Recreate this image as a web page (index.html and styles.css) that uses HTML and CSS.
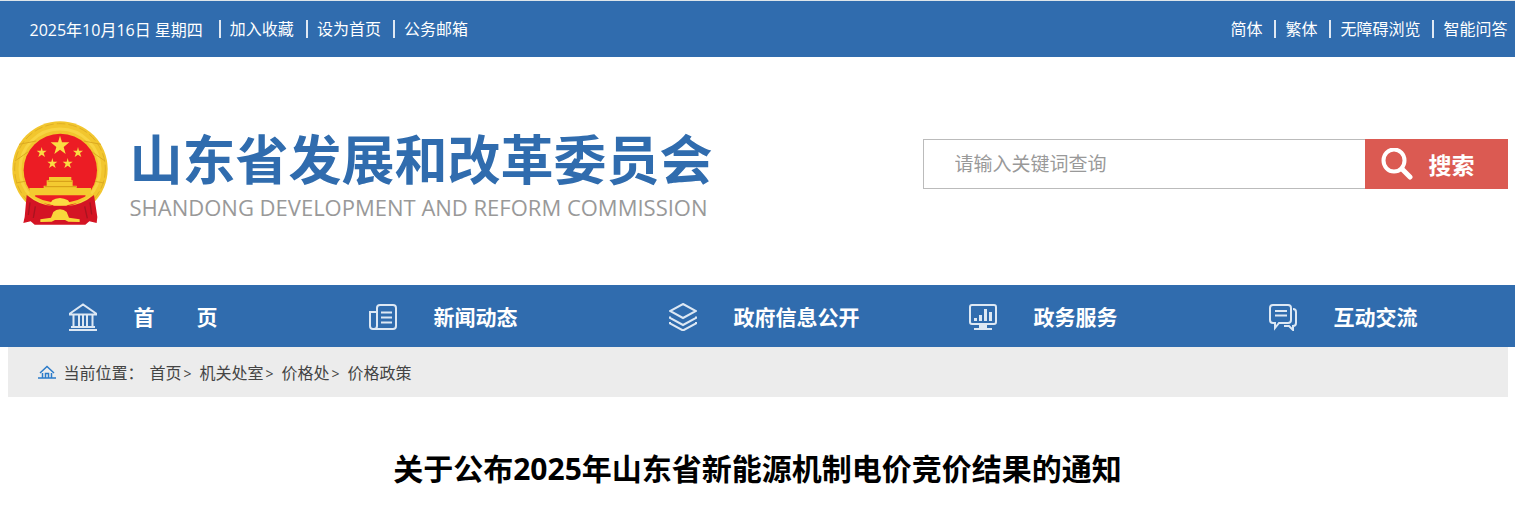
FILE: index.html
```html
<!DOCTYPE html>
<html lang="zh-CN">
<head>
  <meta charset="utf-8">
  <title>关于公布2025年山东省新能源机制电价竞价结果的通知</title>
  <link rel="stylesheet" href="styles.css">
</head>
<body>
  <div class="topBar">
    <div class="container topInner">
      <div class="topLinks">
        <span class="date">2025年10月16日 星期四</span>
        <a href="#">加入收藏</a>
        <a href="#">设为首页</a>
        <a href="#">公务邮箱</a>
      </div>
      <div class="topLinks">
        <a href="#">简体</a>
        <a href="#">繁体</a>
        <a href="#">无障碍浏览</a>
        <a href="#">智能问答</a>
      </div>
    </div>
  </div>

  <header class="container header">
    <a class="logo" href="#">
      <svg class="emblem" viewBox="36 32 288 312" aria-hidden="true">
        <circle cx="180" cy="176" r="143" fill="#f2c62e"/>
        <circle cx="180" cy="176" r="136" fill="none" stroke="#e0b026" stroke-width="3" stroke-dasharray="26 9"/>
        <circle cx="180" cy="176" r="120" fill="none" stroke="#f8d442" stroke-width="9"/>
        <path d="M45 152l40-28M315 152l-40-28M57 102l52-10M303 102l-52-10M48 218l43-8M312 218l-43-8" stroke="#dcaa22" stroke-width="3"/>
        <circle cx="181" cy="180" r="110" fill="#ec1c24"/>
        <g fill="#fbdc43">
          <path d="M180 76l6 20 22 0-17 14 6 21-17-13-17 13 6-21-17-14 22 0z"/>
          <path id="star" d="M125 110l3 11 12 0-9 7 4 12-10-7-10 7 4-12-9-7 12 0z"/>
          <use href="#star" x="109"/>
          <use href="#star" x="32" y="33"/>
          <use href="#star" x="78" y="33"/>
        </g>
        <path d="M147 200h67v10h4v16h12v7h43v12l-10 12H98l-10-12v-12h43v-7h9v-16h7z" fill="#f4ca30"/>
        <path d="M143 213h74M134 229h94" stroke="#d39b16" stroke-width="3"/>
        <path d="M80 254q38 31 78 33h44q42-2 80-33l10 66-2 18-22-5-12 10H104l-12-10-22 5 4-18z" fill="#d41424"/>
        <path d="M104 255h154q-20 20-54 24h-46q-34-4-54-24z" fill="#ec1c24"/>
        <path d="M88 250q34 31 92 31t94-31" fill="none" stroke="#f4ca30" stroke-width="8"/>
        <path d="M150 280l7-10 10-5 13-2 12 2 12 5 7 10-12 6H162z" fill="#fbdc43"/>
        <path d="M121 327l32-5 7-17 9-6 11-2 11 2 9 6 7 17 32 5v8l-34-1-10-5h-30l-10 5-34 1z" fill="#f9d63b"/>
        <path d="M90 276l-5 38M106 288l-6 35M270 276l5 36M254 288l8 36" stroke="#a81420" stroke-width="4"/>
      </svg>
      <span class="logoText">
        <span class="logoName">山东省发展和改革委员会</span>
        <span class="logoEn">SHANDONG DEVELOPMENT AND REFORM COMMISSION</span>
      </span>
    </a>
    <form class="search">
      <input type="text" placeholder="请输入关键词查询" aria-label="请输入关键词查询">
      <button type="button">
        <svg class="searchIcon" viewBox="0 0 32 32" aria-hidden="true">
          <ellipse cx="13" cy="12.500" rx="10.500" ry="11" fill="none" stroke="#fff" stroke-width="4"/>
          <path d="M21 21l8 8" stroke="#fff" stroke-width="5" stroke-linecap="round"/>
        </svg>
        <span>搜索</span>
      </button>
    </form>
  </header>

  <nav class="nav">
    <div class="container navInner">
      <a href="#">
        <svg viewBox="0 0 28 28" aria-hidden="true">
          <path d="M1 10.500L14 1.500l13 9v1H1zM4.500 12v12M10 12v12M14 12v12M18 12v12M23.500 12v12M2 24h24"/>
          <path d="M0 27h28" stroke-width="2"/>
        </svg>
        <span>首&emsp;&emsp;页</span>
      </a>
      <a href="#">
        <svg viewBox="0 0 28 28" aria-hidden="true">
          <path d="M8 23V5q0-3 3-3h13q3 0 3 3v18q0 3-3 3H4q-3 0-3-3V9h7M8 23q0 3-3 3M12 9.500h11M12 14.500h11M12 19.500h11"/>
        </svg>
        <span>新闻动态</span>
      </a>
      <a href="#">
        <svg viewBox="0 0 28 28" aria-hidden="true">
          <path d="M14 1l13 7-13 7L1 8zM1 13.500v1.500l13 7 13-7v-1.500M1 19v1.500l13 7 13-7V19"/>
        </svg>
        <span>政府信息公开</span>
      </a>
      <a href="#">
        <svg viewBox="0 0 28 28" aria-hidden="true">
          <rect x="1" y="2" width="26" height="19" rx="2"/>
          <path d="M6.500 18v-3M11.500 18v-6M16.500 18V6M21.500 18V9" stroke-width="3"/>
          <path d="M14 21v4" stroke-width="8"/>
          <path d="M9 26h14H5" stroke-width="2"/>
        </svg>
        <span>政务服务</span>
      </a>
      <a href="#">
        <svg viewBox="0 0 28 28" aria-hidden="true">
          <path d="M4 2h15q3 0 3 3v12q0 3-3 3h-9l-4 5v-5H4q-3 0-3-3V5q0-3 3-3zM6 8h12M6 12.500h12M24 6q3 0 3 3v11q0 3-3 3v4l-4-4h-5"/>
        </svg>
        <span>互动交流</span>
      </a>
    </div>
  </nav>

  <main class="container">
    <div class="crumbs">
      <svg viewBox="0 0 18 14" aria-hidden="true">
        <path d="M2 8l7-6.500L16 8M4.500 8v5M13.500 8v5M7.500 13V8.500h3V13M0 13h18" fill="none" stroke="#2b7bc9" stroke-width="1.500"/>
      </svg>
      <span class="crumbLabel">当前位置：</span>
      <a href="#">首页</a>
      <a href="#">机关处室</a>
      <a href="#">价格处</a>
      <a href="#">价格政策</a>
    </div>
    <h1>关于公布2025年山东省新能源机制电价竞价结果的通知</h1>
  </main>
</body>
</html>
```

FILE: styles.css
```css
body{
  margin: 0;
  background-color: #fff;
  color: #444;
  font-family: "Open Sans", "Noto Sans CJK SC", sans-serif;
  font-size: 16px;
}
a{
  color: inherit;
  text-decoration: none;
}
.container{
  max-width: 1500px;
  margin: 0 auto;
}
.topBar{
  background-color: #306cae;
  border-top: 1px solid #dde5ea;
  color: #fff;
}
.topInner{
  display: flex;
  justify-content: space-between;
  height: 56px;
}
.topLinks{
  display: flex;
  align-items: center;
}
.date{
  margin: 0 4px 0 22px;
}
.topLinks a{
  line-height: 18px;
}
.topLinks > * + a{
  margin-left: 12px;
  padding-left: 9px;
  border-left: 2px solid #dfe8f3;
}
.header{
  display: flex;
  justify-content: space-between;
  align-items: center;
  height: 228px;
}
.logo{
  display: flex;
  align-items: center;
  gap: 22px;
  padding: 4px 0 0 4px;
}
.emblem{
  width: 96px;
  height: 104px;
}
.logoText{
  display: flex;
  flex-direction: column;
  white-space: nowrap;
}
.logoName{
  color: #306cae;
  font-size: 53px;
  font-weight: bold;
  line-height: 68px;
}
.logoEn{
  color: #999;
  font-size: 22px;
  line-height: 26px;
}
.search{
  display: flex;
  width: 39%;
  height: 50px;
  margin-bottom: 14px;
}
.search input{
  flex: 1;
  min-width: 0;
  box-sizing: border-box;
  padding: 0 31px;
  border: 1px solid #bbb;
  border-right: none;
  font-family: inherit;
  font-size: 19px;
}
.search input::placeholder{
  color: #999;
}
.search button{
  display: flex;
  align-items: center;
  gap: 16px;
  padding: 0 33px 0 16px;
  border: none;
  background-color: #db5a52;
  color: #fff;
  font-family: inherit;
  font-size: 23px;
  font-weight: bold;
}
.searchIcon{
  width: 32px;
  height: 32px;
}
.nav{
  background-color: #306cae;
  color: #fff;
}
.navInner{
  display: grid;
  grid-template-columns: repeat(5, 1fr);
}
.navInner a{
  display: flex;
  align-items: center;
  gap: 37px;
  height: 62px;
  padding-left: 61px;
  font-size: 21px;
  font-weight: bold;
}
.navInner svg{
  width: 28px;
  height: 28px;
  padding-top: 2px;
  fill: none;
  stroke: #dde8f4;
  stroke-width: 2;
}
.crumbs{
  display: flex;
  align-items: center;
  height: 50px;
  padding-left: 30px;
  background-color: #ececec;
}
.crumbs svg{
  width: 18px;
  height: 14px;
}
.crumbLabel{
  margin: 0 6px 0 8px;
}
.crumbs a:not(:last-child)::after{
  content: ">";
  margin: 0 8px 0 2px;
  font-size: 14px;
}
h1{
  margin: 50px 0 0;
  color: #000;
  font-size: 30px;
  line-height: 44px;
  text-align: center;
}
```
